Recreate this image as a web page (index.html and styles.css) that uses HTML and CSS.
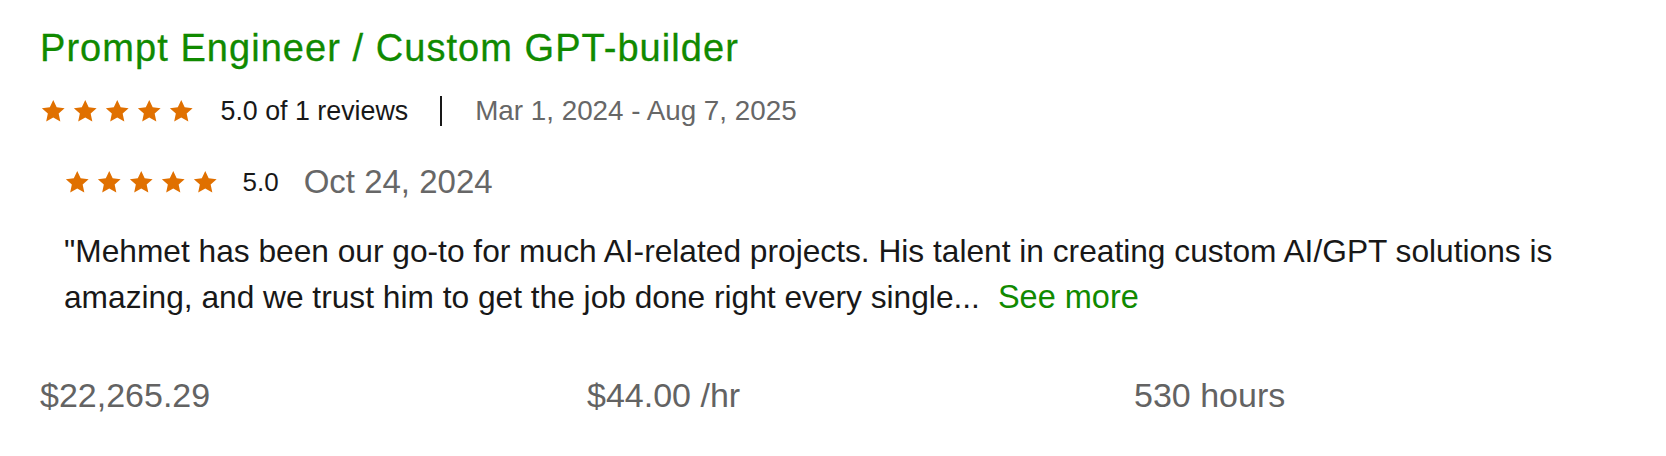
FILE: index.html
```html
<!DOCTYPE html>
<html>
<head>
<meta charset="utf-8">
<link rel="stylesheet" href="styles.css">
</head>
<body>
<div class="card">
  <h2 class="title">Prompt Engineer / Custom GPT-builder</h2>
  <div class="summary">
    <span class="stars">
      <svg viewBox="0 0 24 24"><path d="M12 1.8l3.1 6.6 7.2.8-5.4 4.9 1.5 7.1L12 17.6l-6.4 3.6 1.5-7.1-5.4-4.9 7.2-.8z"/></svg>
      <svg viewBox="0 0 24 24"><path d="M12 1.8l3.1 6.6 7.2.8-5.4 4.9 1.5 7.1L12 17.6l-6.4 3.6 1.5-7.1-5.4-4.9 7.2-.8z"/></svg>
      <svg viewBox="0 0 24 24"><path d="M12 1.8l3.1 6.6 7.2.8-5.4 4.9 1.5 7.1L12 17.6l-6.4 3.6 1.5-7.1-5.4-4.9 7.2-.8z"/></svg>
      <svg viewBox="0 0 24 24"><path d="M12 1.8l3.1 6.6 7.2.8-5.4 4.9 1.5 7.1L12 17.6l-6.4 3.6 1.5-7.1-5.4-4.9 7.2-.8z"/></svg>
      <svg viewBox="0 0 24 24"><path d="M12 1.8l3.1 6.6 7.2.8-5.4 4.9 1.5 7.1L12 17.6l-6.4 3.6 1.5-7.1-5.4-4.9 7.2-.8z"/></svg>
    </span>
    <span class="score">5.0 of 1 reviews</span>
    <span class="divider"></span>
    <span class="range">Mar 1, 2024 - Aug 7, 2025</span>
  </div>
  <div class="review">
    <div class="review-head">
      <span class="stars">
        <svg viewBox="0 0 24 24"><path d="M12 1.8l3.1 6.6 7.2.8-5.4 4.9 1.5 7.1L12 17.6l-6.4 3.6 1.5-7.1-5.4-4.9 7.2-.8z"/></svg>
        <svg viewBox="0 0 24 24"><path d="M12 1.8l3.1 6.6 7.2.8-5.4 4.9 1.5 7.1L12 17.6l-6.4 3.6 1.5-7.1-5.4-4.9 7.2-.8z"/></svg>
        <svg viewBox="0 0 24 24"><path d="M12 1.8l3.1 6.6 7.2.8-5.4 4.9 1.5 7.1L12 17.6l-6.4 3.6 1.5-7.1-5.4-4.9 7.2-.8z"/></svg>
        <svg viewBox="0 0 24 24"><path d="M12 1.8l3.1 6.6 7.2.8-5.4 4.9 1.5 7.1L12 17.6l-6.4 3.6 1.5-7.1-5.4-4.9 7.2-.8z"/></svg>
        <svg viewBox="0 0 24 24"><path d="M12 1.8l3.1 6.6 7.2.8-5.4 4.9 1.5 7.1L12 17.6l-6.4 3.6 1.5-7.1-5.4-4.9 7.2-.8z"/></svg>
      </span>
      <span class="rscore">5.0</span>
      <span class="rdate">Oct 24, 2024</span>
    </div>
    <p class="quote">"Mehmet has been our go-to for much AI-related projects. His talent in creating custom AI/GPT solutions is amazing, and we trust him to get the job done right every single...<a class="more" href="#">See more</a></p>
  </div>
  <div class="stats">
    <span>$22,265.29</span>
    <span>$44.00 /hr</span>
    <span>530 hours</span>
  </div>
</div>
</body>
</html>
```
FILE: styles.css
```css
html, body { margin: 0; padding: 0; background: #fff; }
body { font-family: "Liberation Sans", Arial, sans-serif; color: #181818; }
.card { padding: 26px 0 0 40px; }
.title { margin: 0; font-size: 38px; letter-spacing: 1.05px; font-weight: 400; color: #108a00; line-height: 44px; -webkit-text-stroke: 0.3px #108a00; }
.summary { display: flex; align-items: center; margin-top: 23px; height: 36px; }
.stars { display: inline-flex; gap: 5.5px; }
.stars svg { width: 26.5px; height: 26.5px; fill: #e07000; }
.score { font-size: 26.8px; margin-left: 26px; }
.divider { width: 2px; height: 30px; background: #181818; margin: 0 33px 0 32px; }
.range { font-size: 27.8px; color: #676767; }
.review { padding-left: 24px; margin-top: 35px; }
.review-head { display: flex; align-items: center; height: 36px; }
.rscore { font-size: 26px; margin-left: 24px; }
.rdate { font-size: 33px; color: #676767; margin-left: 25px; }
.quote { margin: 28px 0 0 0; font-size: 31.7px; line-height: 46px; max-width: 1575px; }
.more { color: #108a00; text-decoration: none; margin-left: 18px; font-size: 32.5px; }
.stats { display: grid; grid-template-columns: repeat(3, 547px); margin-top: 55px; font-size: 34px; line-height: 40px; color: #636363; }
```
